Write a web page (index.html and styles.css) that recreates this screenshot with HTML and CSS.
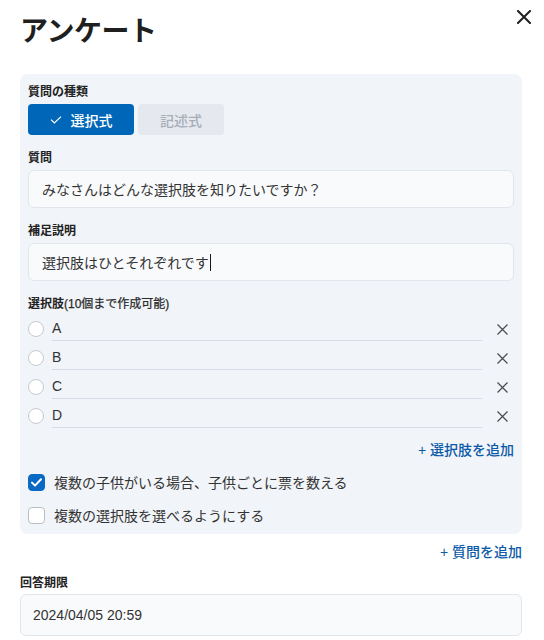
FILE: index.html
```html
<!DOCTYPE html>
<html lang="ja">
<head>
<meta charset="utf-8">
<title>アンケート</title>
<link rel="stylesheet" href="styles.css">
</head>
<body>
<div class="page">
  <header class="header">
    <h1 class="title">アンケート</h1>
    <button class="close" type="button" aria-label="閉じる">
      <svg width="14" height="14" viewBox="0 0 14 14"><path d="M1 1 L13 13 M13 1 L1 13" stroke="#1f1f1f" stroke-width="2" fill="none" stroke-linecap="square"/></svg>
    </button>
  </header>

  <section class="panel">
    <div class="label">質問の種類</div>
    <div class="toggle">
      <div class="seg seg-active">
        <svg class="seg-check" width="12" height="8" viewBox="0 0 12 8"><path d="M1 3.6 L4.4 7 L11 0.6" stroke="#fff" stroke-width="1.2" fill="none"/></svg>
        <span>選択式</span>
      </div>
      <div class="seg seg-off">記述式</div>
    </div>

    <div class="field">
      <div class="label">質問</div>
      <div class="input">みなさんはどんな選択肢を知りたいですか？</div>
    </div>

    <div class="field">
      <div class="label">補足説明</div>
      <div class="input">選択肢はひとそれぞれです<span class="caret"></span></div>
    </div>

    <div class="field">
      <div class="label">選択肢<span class="label-note">(10個まで作成可能)</span></div>
      <ul class="options">
        <li class="option">
          <span class="radio"></span>
          <span class="option-input">A</span>
          <button class="remove" type="button" aria-label="削除"><svg width="11" height="11" viewBox="0 0 11 11"><path d="M0.5 0.5 L10.5 10.5 M10.5 0.5 L0.5 10.5" stroke="#4a4a4a" stroke-width="1.2" fill="none"/></svg></button>
        </li>
        <li class="option">
          <span class="radio"></span>
          <span class="option-input">B</span>
          <button class="remove" type="button" aria-label="削除"><svg width="11" height="11" viewBox="0 0 11 11"><path d="M0.5 0.5 L10.5 10.5 M10.5 0.5 L0.5 10.5" stroke="#4a4a4a" stroke-width="1.2" fill="none"/></svg></button>
        </li>
        <li class="option">
          <span class="radio"></span>
          <span class="option-input">C</span>
          <button class="remove" type="button" aria-label="削除"><svg width="11" height="11" viewBox="0 0 11 11"><path d="M0.5 0.5 L10.5 10.5 M10.5 0.5 L0.5 10.5" stroke="#4a4a4a" stroke-width="1.2" fill="none"/></svg></button>
        </li>
        <li class="option">
          <span class="radio"></span>
          <span class="option-input">D</span>
          <button class="remove" type="button" aria-label="削除"><svg width="11" height="11" viewBox="0 0 11 11"><path d="M0.5 0.5 L10.5 10.5 M10.5 0.5 L0.5 10.5" stroke="#4a4a4a" stroke-width="1.2" fill="none"/></svg></button>
        </li>
      </ul>
    </div>

    <div class="add-row add-option"><a class="add-link" href="#">+ 選択肢を追加</a></div>

    <div class="checks">
      <div class="check">
        <span class="box box-on"><svg width="11" height="9" viewBox="0 0 11 9"><path d="M1 4.6 L4 7.6 L10 1.2" stroke="#fff" stroke-width="2" fill="none" stroke-linecap="round" stroke-linejoin="round"/></svg></span>
        <span>複数の子供がいる場合、子供ごとに票を数える</span>
      </div>
      <div class="check">
        <span class="box"></span>
        <span>複数の選択肢を選べるようにする</span>
      </div>
    </div>
  </section>

  <div class="add-row add-question"><a class="add-link" href="#">+ 質問を追加</a></div>

  <div class="deadline">
    <div class="label">回答期限</div>
    <div class="input input-date">2024/04/05 20:59</div>
  </div>
</div>
</body>
</html>
```

FILE: styles.css
```css
* { box-sizing: border-box; }

body {
  margin: 0;
  background: #ffffff;
  color: #2b2b2b;
  font-family: "Liberation Sans", "Noto Sans CJK JP", sans-serif;
}

.page {
  padding: 0 22px 0 20px;
  width: 544px;
}

.header {
  display: flex;
  justify-content: space-between;
  align-items: flex-start;
  height: 49px;
}

.title {
  margin: 0;
  padding-top: 15px;
  font-size: 28px;
  line-height: 34px;
  font-weight: 700;
  color: #1f1f1f;
  letter-spacing: -0.5px;
}

.close {
  margin-top: 9px;
  margin-right: -11px;
  width: 18px;
  height: 16px;
  padding: 0;
  border: 0;
  background: none;
  display: flex;
  align-items: center;
  justify-content: center;
}

.panel {
  margin-top: 25px;
  background: #f1f4f8;
  border-radius: 8px;
  padding: 10px 8px 7px 8px;
}

.label {
  height: 16px;
  display: flex;
  align-items: center;
  font-size: 12px;
  line-height: 16px;
  font-weight: 700;
  color: #222;
  margin-bottom: 4px;
  white-space: nowrap;
}

.label-note {
  font-weight: 400;
  color: #2a2a2a;
  -webkit-text-stroke: 0.25px #2a2a2a;
}

.toggle {
  display: flex;
  gap: 4px;
}

.seg {
  height: 31px;
  border-radius: 4px;
  display: flex;
  align-items: center;
  justify-content: center;
  font-size: 14px;
  font-weight: 500;
}

.seg-active {
  width: 106px;
  background: #0067b8;
  color: #fff;
  gap: 9px;
}

.seg-check { display: block; }

.seg-off {
  width: 86px;
  background: #e5e9ef;
  color: #a6adb8;
}

.field { margin-top: 15px; }

.input {
  height: 38px;
  border: 1px solid #e1e5ec;
  border-radius: 6px;
  background: #f9fafc;
  padding: 0 13px;
  display: flex;
  align-items: center;
  font-size: 14px;
  color: #333;
}

.caret {
  display: inline-block;
  width: 1px;
  height: 17px;
  background: #1a1a1a;
  margin-left: 1px;
}

.options {
  list-style: none;
  margin: -4px 0 0 0;
  padding: 0;
}

.option {
  display: flex;
  align-items: center;
  height: 29px;
  padding-top: 5px;
}

.radio {
  width: 16px;
  height: 16px;
  border-radius: 50%;
  border: 1px solid #c6cad1;
  background: #fff;
  flex: none;
}

.option-input {
  flex: 1;
  margin-left: 8px;
  height: 24px;
  line-height: 23px;
  border-bottom: 1px solid #d7dce8;
  font-size: 14px;
  color: #333;
}

.remove {
  flex: none;
  width: 24px;
  height: 24px;
  margin-left: 8px;
  padding: 0;
  border: 0;
  background: none;
  display: flex;
  align-items: center;
  justify-content: center;
}

.add-row {
  display: flex;
  justify-content: flex-end;
  align-items: center;
  height: 20px;
  font-size: 14px;
}

.add-option { margin-top: 12px; }
.add-question { margin-top: 8px; }

.add-link {
  color: #0b5aa8;
  text-decoration: none;
  font-weight: 500;
  line-height: 20px;
}

.checks {
  margin-top: 10px;
  display: flex;
  flex-direction: column;
  gap: 9px;
}

.check {
  display: flex;
  align-items: center;
  height: 24px;
  gap: 9px;
  font-size: 14px;
  color: #333;
}

.box {
  width: 17px;
  height: 17px;
  border-radius: 4px;
  border: 1px solid #b9bdc4;
  background: #fff;
  flex: none;
  display: flex;
  align-items: center;
  justify-content: center;
}

.box-on {
  background: #0a69c3;
  border-color: #0a69c3;
}

.deadline { margin-top: 13px; }

.deadline .label { margin-bottom: 3px; }

.input-date {
  height: 42px;
  padding: 0 12px;
}
```
